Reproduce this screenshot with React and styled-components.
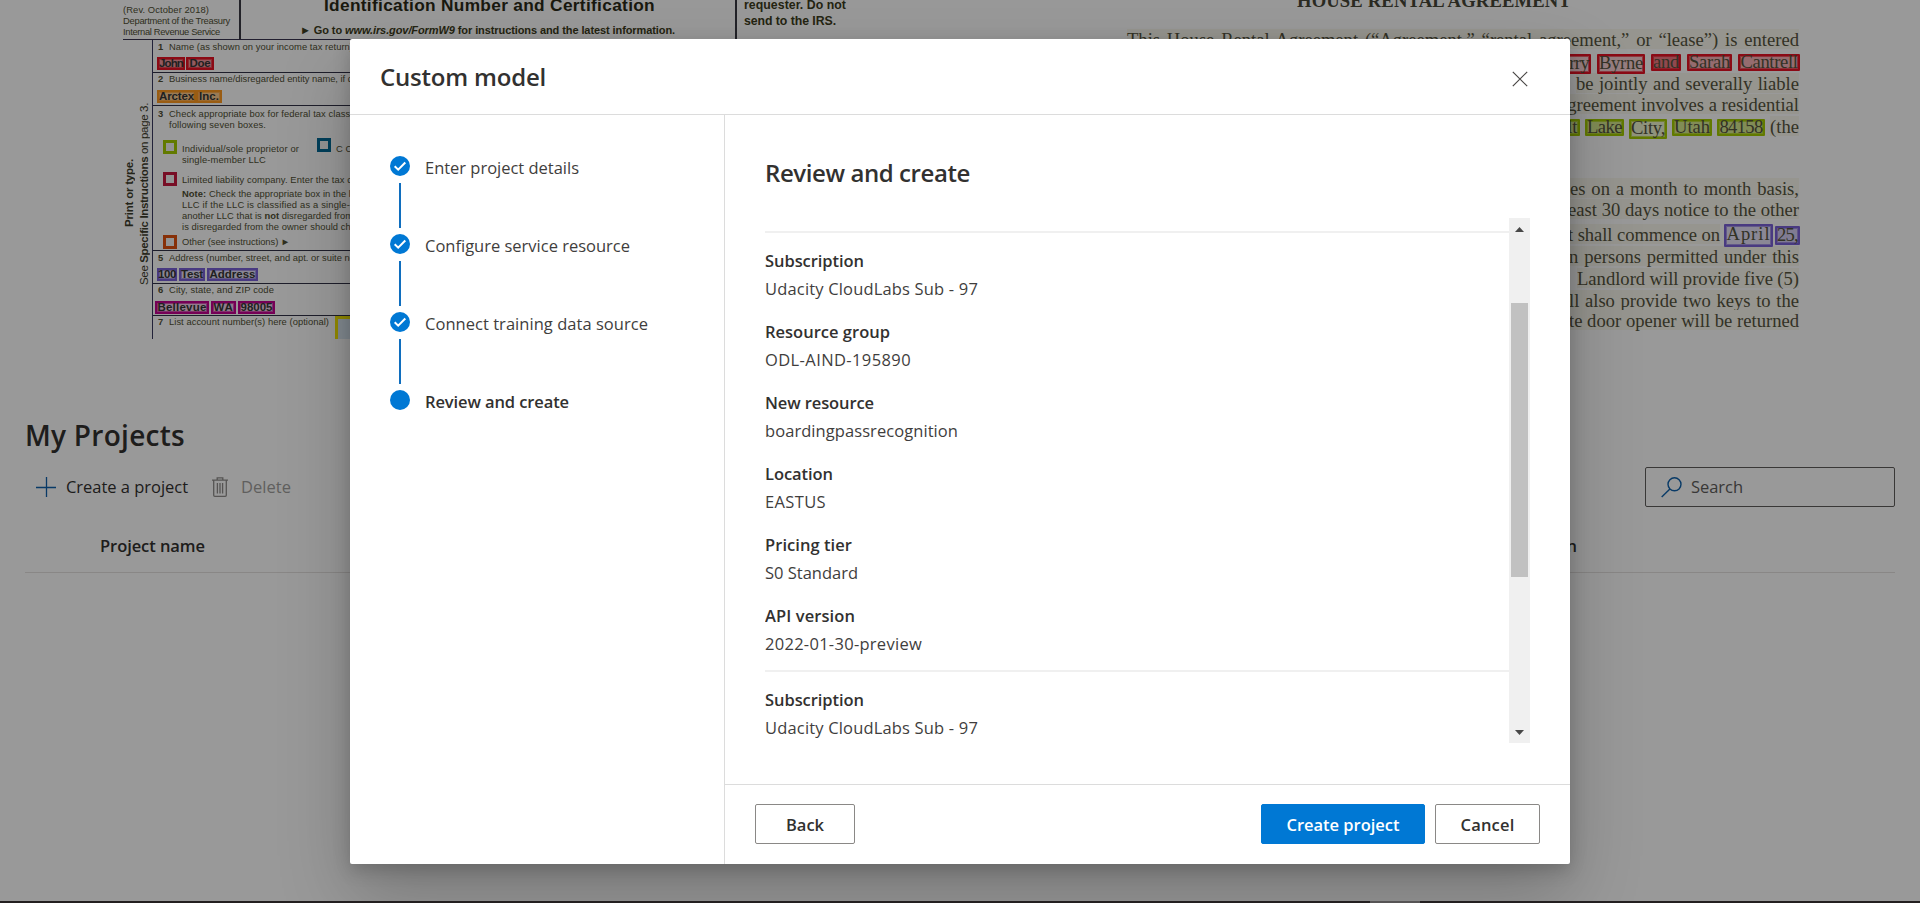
import React, { useLayoutEffect, useRef, useState } from 'react';
import styled, { createGlobalStyle, css } from 'styled-components';

const UI = '"Open Sans", "Noto Sans", sans-serif';
const SANS = '"Liberation Sans", Arial, sans-serif';
const SERIF = '"Liberation Serif", "Times New Roman", serif';

const Global = createGlobalStyle`
  * { box-sizing: border-box; }
  body { margin: 0; background: #fff; font-family: ${UI}; font-size: 16.5px; line-height: 24px; color: #323130; }
  button { font: inherit; cursor: pointer; }
`;

/* Text set to a given measure by adjusting its tracking or its word spaces. */
const Run = styled.span`
  display: inline-block;
  align-self: flex-start;
  justify-self: start;
  white-space: pre;
  flex: none;
`;

function Fit({ w, words, children }) {
  const ref = useRef(null);
  const [space, setSpace] = useState(0);
  useLayoutEffect(() => {
    const el = ref.current;
    const box = el.getBoundingClientRect();
    const text = el.textContent;
    const slots = words ? text.split(' ').length - 1 : text.length;
    setSpace((w - Math.max(box.width, box.height)) / slots);
  }, [w, words]);
  return (
    <Run ref={ref} style={{ [words ? 'wordSpacing' : 'letterSpacing']: `${space}px` }}>
      {children}
    </Run>
  );
}

/* ---------- page ---------- */

const Page = styled.div`
  position: relative;
  width: 1920px;
  height: 903px;
  overflow: hidden;
  display: flex;
  flex-direction: column;
`;

const Samples = styled.div`
  display: flex;
  justify-content: space-between;
  height: 415px;
  padding: 0 120px 0 123px;
`;

/* ---------- tax form ---------- */

const Form = styled.div`
  width: 730px;
  height: 339px;
  overflow: hidden;
  font-family: ${SANS};
  font-size: 9.4px;
  line-height: 11px;
  color: #504f34;
`;

const FormHead = styled.div`
  display: flex;
  height: 40px;
  border-bottom: 1px solid #3a3450;
`;

const FormCell = styled.div`
  display: flex;
  flex-direction: column;
  width: ${(p) => p.$w}px;
  border-right: ${(p) => (p.$last ? 'none' : '2px solid #3a3a44')};
  padding: ${(p) => p.$pad};
  font-weight: ${(p) => (p.$bold ? 700 : 400)};
  color: ${(p) => (p.$bold ? '#3d3c20' : 'inherit')};
`;

const FormTitle = styled.div`
  font-size: 17.3px;
  line-height: 20px;
  color: #2c2b18;
  padding-left: 83px;
  margin-top: -5px;
`;

const FormHint = styled.div`
  font-size: 11px;
  line-height: 12px;
  padding: 9px 0 0 59px;
`;

const Requester = styled.div`
  margin-top: -3px;
  font-size: 12.3px;
  line-height: 16px;
`;

const FormBody = styled.div`
  display: flex;
  height: 299px;
`;

const Side = styled.div`
  display: flex;
  justify-content: flex-end;
  gap: 1px;
  width: 28px;
  margin-right: 1px;
  font-size: 11.5px;
  line-height: 14px;
  color: #3d3c2c;
`;

const SideText = styled.div`
  writing-mode: vertical-rl;
  transform: rotate(180deg);
  font-weight: ${(p) => (p.$bold ? 700 : 400)};
  margin-top: ${(p) => p.$top}px;
  align-self: flex-start;
  width: 14px;
`;

const Questions = styled.div`
  flex: 1;
  border-left: 1px solid #3a3a60;
`;

const Question = styled.div`
  height: ${(p) => p.$h}px;
  padding: ${(p) => p.$top ?? 1}px 0 0 5px;
  border-bottom: ${(p) => (p.$last ? 'none' : '1px solid #333348')};
`;

const Prompt = styled.div`
  display: flex;
  height: 11px;
  margin-left: ${(p) => p.$indent || 0}px;

  b { width: 11px; flex: none; }
`;

const Answer = styled.div`
  display: flex;
  gap: ${(p) => p.$gap ?? 2}px;
  margin: ${(p) => p.$top}px 0 0 ${(p) => p.$indent ?? -1}px;
`;

const tag = css`
  border: 2px solid ${(p) => p.$c};
  box-shadow: inset 0 0 0 1px ${(p) => p.$c}99;
  background: ${(p) => p.$c}${(p) => p.$fill || '30'};
`;

const AnswerTag = styled.span`
  ${tag}
  display: flex;
  align-items: center;
  justify-content: center;
  width: ${(p) => p.$w}px;
  height: 13px;
  font-size: 11.5px;
  font-weight: 700;
  color: #363636;

  ${Run} { align-self: center; }
`;

const Option = styled.div`
  display: flex;
  height: ${(p) => p.$h}px;
  margin-top: ${(p) => p.$gap || 0}px;
  padding-left: 5px;
`;

const Box = styled.span`
  flex: none;
  width: 14px;
  height: 14px;
  margin: ${(p) => p.$top || 0}px 5px 0 0;
  border: 3px solid ${(p) => p.$c};
  background: #f6f6f6;
`;

const OptionText = styled.div`
  display: flex;
  flex-direction: column;
  padding-top: ${(p) => p.$top || 0}px;
  width: ${(p) => (p.$w ? p.$w + 'px' : 'auto')};
`;

const Note = styled(OptionText)`
  height: 50px;
  padding: 3px 0 0 24px;
`;

const Pending = styled.span`
  width: 60px;
  height: 26px;
  margin-left: 6px;
  border: 3px solid #f5e800;
  background: #dceaf5;
`;

/* ---------- rental agreement ---------- */

const Lease = styled.div`
  display: flex;
  flex-direction: column;
  align-items: flex-end;
  width: 674px;
  height: 339px;
  font-family: ${SERIF};
  font-size: 18.6px;
  line-height: 22px;
  color: #55543f;
`;

const LeaseTitle = styled.div`
  width: 503px;
  height: 29px;
  margin: -10px 0 10px;
  font-weight: 700;
  color: #49483a;
`;

const LeaseLine = styled.div`
  display: flex;
  flex: none;
  gap: ${(p) => p.$gap || 0}px;
  height: ${(p) => p.$h}px;
`;

const Ink = styled.span`
  height: 20px;
  margin-right: ${(p) => (p.$mid ? 2 : 1)}px;
  background: #fbf9ee;
`;

const LeaseTag = styled.span`
  ${tag}
  position: relative;
  display: flex;
  align-items: center;
  justify-content: center;
  flex: none;
  width: ${(p) => p.$w}px;
  height: ${(p) => p.$h || 17}px;
  margin-top: ${(p) => p.$top ?? 4}px;
  padding-bottom: ${(p) => p.$lift ?? 1}px;
  line-height: 12px;
  border-radius: 1px;

  ${Run} { align-self: center; }
`;

/* ---------- projects ---------- */

const Projects = styled.section`
  padding: 0 25px;
`;

const Heading = styled.h1`
  margin: 0 0 12px;
  font-size: 28px;
  font-weight: 600;
  line-height: 40px;
`;

const Toolbar = styled.div`
  display: flex;
  align-items: center;
  height: 40px;
  padding-left: 11px;
`;

const Command = styled.div`
  display: flex;
  align-items: center;
  gap: ${(p) => p.$gap}px;
  margin-right: ${(p) => p.$after || 0}px;
  color: ${(p) => (p.$off ? '#a19f9d' : '#323130')};

  ${Run} { align-self: center; }
`;

const SearchBox = styled.label`
  display: flex;
  align-items: center;
  gap: 9px;
  width: 250px;
  height: 40px;
  margin-left: auto;
  padding-left: 15px;
  border: 1px solid #605e5c;
  border-radius: 2px;
  color: #605e5c;

  ${Run} { align-self: center; }
`;

const TableHead = styled.div`
  display: flex;
  justify-content: space-between;
  align-items: center;
  height: 54px;
  margin-top: 12px;
  padding: 0 318px 0 75px;
  border-bottom: 1px solid #e4e2e0;
  font-weight: 600;

  ${Run} { align-self: center; }
`;

const StatusStrip = styled.div`
  position: relative;
  display: flex;
  height: 2px;
  margin-top: auto;
  padding-left: 1370px;
  background: #231f20;
  z-index: 1;

  &::before { content: ''; width: 50px; background: #565455; }
`;

/* ---------- dialog ---------- */

const Overlay = styled.div`
  position: absolute;
  inset: 0;
  padding: 39px 350px;
  background: rgba(0, 0, 0, 0.4);
`;

const Dialog = styled.div`
  display: flex;
  flex-direction: column;
  width: 1220px;
  height: 825px;
  background: #fff;
  border-radius: 2px;
  box-shadow: 0 32px 72px rgba(0, 0, 0, 0.22), 0 6px 18px rgba(0, 0, 0, 0.18);
`;

const DialogHeader = styled.header`
  display: flex;
  align-items: center;
  justify-content: space-between;
  height: 76px;
  padding: 0 42px 0 30px;
  border-bottom: 1px solid #dcdcdc;
`;

const Title = styled.h2`
  margin: 0;
  font-size: 24px;
  font-weight: 600;
  line-height: 32px;
`;

const CloseButton = styled.button`
  display: flex;
  margin-top: 5px;
  padding: 0;
  border: 0;
  background: none;
`;

const DialogBody = styled.div`
  display: flex;
  height: 749px;
`;

const Steps = styled.nav`
  width: 375px;
  padding: 41px 0 0 40px;
  border-right: 1px solid #dcdcdc;
`;

const Step = styled.div`
  display: flex;
  gap: 15px;
  height: 78px;
  font-weight: ${(p) => (p.$current ? 600 : 400)};
  color: ${(p) => (p.$current ? '#323130' : '#3f3e3d')};
`;

const Track = styled.div`
  display: flex;
  flex-direction: column;
  align-items: center;
`;

const Dot = styled.span`
  display: flex;
  width: 20px;
  height: 20px;
  border-radius: 50%;
  background: #0078d4;
`;

const Connector = styled.span`
  width: 2px;
  height: 45px;
  margin-top: 7px;
  background: #106ebe;
`;

const Content = styled.div`
  display: flex;
  flex-direction: column;
  width: 845px;
  padding-top: 42px;
`;

const Scroller = styled.div`
  display: flex;
  height: 525px;
  margin: 29px 40px 41px;
`;

const ContentTitle = styled(Title)`
  padding-left: 40px;
`;

const List = styled.div`
  flex: 1;
  overflow: hidden;
  padding-top: 13px;
`;

const Group = styled.dl`
  display: grid;
  row-gap: 19px;
  margin: 0;
  padding: 16px 0 14px;
  border-top: 2px solid #f0f0f0;
`;

const Entry = styled.div`
  display: grid;
  row-gap: 4px;
  height: 52px;

  dt { font-weight: 600; }
  dd { margin: 0; color: #3f3e3d; }
`;

const Scrollbar = styled.div`
  display: flex;
  flex-direction: column;
  align-items: center;
  justify-content: space-between;
  width: 21px;
  padding: 9px 0 8px;
  background: #f0f0f0;
`;

const Thumb = styled.div`
  width: 17px;
  height: 274px;
  margin: 71px 0 auto;
  background: #c1c1c1;
`;

const Footer = styled.footer`
  display: flex;
  gap: 10px;
  height: 80px;
  padding: 19px 30px 0;
  border-top: 1px solid #dcdcdc;
`;

const Button = styled.button`
  display: flex;
  align-items: center;
  justify-content: center;
  width: ${(p) => p.$w}px;
  height: 40px;
  padding: 1px 0 0;
  margin-right: ${(p) => (p.$start ? 'auto' : 0)};
  border: 1px solid ${(p) => (p.$primary ? '#0078d4' : '#8a8886')};
  border-radius: 2px;
  background: ${(p) => (p.$primary ? '#0078d4' : '#fff')};
  color: ${(p) => (p.$primary ? '#fff' : '#323130')};
  font-weight: 600;

  ${Run} { align-self: center; }
`;

/* ---------- icons ---------- */

const PlusIcon = () => (
  <svg width="20" height="20" viewBox="0 0 20 20" fill="none" stroke="#0f62ac" strokeWidth="1.3">
    <path d="M10.500 0v20M0 10.500h20" />
  </svg>
);
const TrashIcon = () => (
  <svg width="16" height="20" viewBox="0 0 16 20" fill="none" stroke="#8f8d8b" strokeWidth="1.3">
    <path d="M0 3.200h16M5.200 3V.8h5.600V3M1.700 3.200v15q0 1.100 1.100 1.100h10.400q1.100 0 1.100-1.100v-15M5.400 6v10.500M8 6v10.500M10.600 6v10.500" />
  </svg>
);
const SearchIcon = () => (
  <svg width="21" height="21" viewBox="0 0 21 21" fill="none" stroke="#0f62ac" strokeWidth="1.4">
    <circle cx="13.500" cy="7.300" r="6.500" />
    <path d="M8.900 11.900L.7 20.100" />
  </svg>
);
const CloseIcon = () => (
  <svg width="16" height="16" viewBox="0 0 16 16" fill="none" stroke="#484644" strokeWidth="1.200">
    <path d="M.8.8l14.400 14.400M15.200.8L.8 15.200" />
  </svg>
);
const CheckIcon = () => (
  <svg width="20" height="20" viewBox="0 0 20 20" fill="none" stroke="#fff" strokeWidth="2">
    <path d="M4.700 10.200l3.500 3.500 7.100-7.200" />
  </svg>
);
const Arrow = ({ down }) => (
  <svg width="9" height="5" viewBox="0 0 9 5" fill="#484848">
    <path d={down ? 'M0 0h9L4.500 5z' : 'M0 5h9L4.500 0z'} />
  </svg>
);

/* ---------- data ---------- */

const steps = [
  ['Enter project details', 154],
  ['Configure service resource', 205],
  ['Connect training data source', 223],
  ['Review and create', 144],
];

const details = [
  ['Subscription', 99, 'Udacity CloudLabs Sub - 97', 213],
  ['Resource group', 125, 'ODL-AIND-195890', 146],
  ['New resource', 109, 'boardingpassrecognition', 193],
  ['Location', 68, 'EASTUS', 61],
  ['Pricing tier', 87, 'S0 Standard', 93],
  ['API version', 90, '2022-01-30-preview', 157],
];

const RED = '#e81123';
const GREEN = '#a4cc00';
const PURPLE = '#7b62d8';
const MAGENTA = '#c4008f';

const Rows = ({ items }) => (
  <Group>
    {items.map(([label, lw, value, vw]) => (
      <Entry key={label}>
        <dt><Fit w={lw}>{label}</Fit></dt>
        <dd><Fit w={vw}>{value}</Fit></dd>
      </Entry>
    ))}
  </Group>
);

const LeaseText = ({ h, w, children }) => (
  <LeaseLine $h={h}>
    <Ink><Fit w={w} words>{children}</Fit></Ink>
  </LeaseLine>
);

function TaxForm() {
  return (
    <Form>
      <FormHead>
        <FormCell $w={118} $pad="4px 0 0 0">
          <Fit w={86}>(Rev. October 2018)</Fit>
          <Fit w={107}>Department of the Treasury</Fit>
          <Fit w={97}>Internal Revenue Service</Fit>
        </FormCell>
        <FormCell $w={496} $bold $pad="0">
          <FormTitle><Fit w={331}>Identification Number and Certification</Fit></FormTitle>
          <FormHint><Fit w={375}>► Go to <i>www.irs.gov/FormW9</i> for instructions and the latest information.</Fit></FormHint>
        </FormCell>
        <FormCell $w={116} $bold $last $pad="0 0 0 7px">
          <Requester>
            <Fit w={102}>requester. Do not</Fit>
            <Fit w={92}>send to the IRS.</Fit>
          </Requester>
        </FormCell>
      </FormHead>
      <FormBody>
        <Side>
          <SideText $bold $top={119}><Fit w={68}>Print or type.</Fit></SideText>
          <SideText $top={63}><Fit w={182}>See <b>Specific Instructions</b> on page 3.</Fit></SideText>
        </Side>
        <Questions>
          <Question $h={33}>
            <Prompt><b>1</b><Fit w={184}>Name (as shown on your income tax return)</Fit></Prompt>
            <Answer $top={5} $gap={1}>
              <AnswerTag $c={RED} $w={28} $fill="70"><Fit w={24}>John</Fit></AnswerTag>
              <AnswerTag $c={RED} $w={28} $fill="70"><Fit w={21}>Doe</Fit></AnswerTag>
            </Answer>
          </Question>
          <Question $h={33} $top={0}>
            <Prompt><b>2</b><Fit w={186}>Business name/disregarded entity name, if di</Fit></Prompt>
            <Answer $top={6} $gap={0}>
              <AnswerTag $c="#ff9a20" $w={39} $fill="80"><Fit w={35}>Arctex</Fit></AnswerTag>
              <AnswerTag $c="#ff9a20" $w={26} $fill="80"><Fit w={20}>Inc.</Fit></AnswerTag>
            </Answer>
          </Question>
          <Question $h={145} $top={2}>
            <Prompt><b>3</b><Fit w={193}>Check appropriate box for federal tax classific</Fit></Prompt>
            <Prompt $indent={11}><Fit w={97}>following seven boxes.</Fit></Prompt>
            <Option $h={35} $gap={8}>
              <Box $c={GREEN} $top={2} />
              <OptionText $w={135} $top={5}>
                <Fit w={117}>Individual/sole proprietor or</Fit>
                <Fit w={84}>single-member LLC</Fit>
              </OptionText>
              <Box $c="#006a96" />
              <OptionText $top={5}>C C</OptionText>
            </Option>
            <Option $h={12}>
              <Box $c="#c81840" $top={-1} />
              <OptionText $top={1}><Fit w={170}>Limited liability company. Enter the tax c</Fit></OptionText>
            </Option>
            <Note>
              <Fit w={169}><b>Note:</b> Check the appropriate box in the l</Fit>
              <Fit w={176}>LLC if the LLC is classified as a single-m</Fit>
              <Fit w={171}>another LLC that is <b>not</b> disregarded from</Fit>
              <Fit w={174}>is disregarded from the owner should che</Fit>
            </Note>
            <Option $h={14}>
              <Box $c="#e2500e" />
              <OptionText $top={1}><Fit w={108}>Other (see instructions) ►</Fit></OptionText>
            </Option>
          </Question>
          <Question $h={33}>
            <Prompt><b>5</b><Fit w={186}>Address (number, street, and apt. or suite no</Fit></Prompt>
            <Answer $top={5}>
              <AnswerTag $c={PURPLE} $w={20}><Fit w={18}>100</Fit></AnswerTag>
              <AnswerTag $c={PURPLE} $w={26}><Fit w={22}>Test</Fit></AnswerTag>
              <AnswerTag $c={PURPLE} $w={51}><Fit w={46}>Address</Fit></AnswerTag>
            </Answer>
          </Question>
          <Question $h={32} $top={0}>
            <Prompt><b>6</b><Fit w={105}>City, state, and ZIP code</Fit></Prompt>
            <Answer $top={6} $indent={-3}>
              <AnswerTag $c={MAGENTA} $w={54}><Fit w={49}>Bellevue</Fit></AnswerTag>
              <AnswerTag $c={MAGENTA} $w={25}><Fit w={20}>WA</Fit></AnswerTag>
              <AnswerTag $c={MAGENTA} $w={37}><Fit w={32}>98005</Fit></AnswerTag>
            </Answer>
          </Question>
          <Question $h={26} $top={0} $last>
            <Prompt>
              <b>7</b>
              <Fit w={160}>List account number(s) here (optional)</Fit>
              <Pending />
            </Prompt>
          </Question>
        </Questions>
      </FormBody>
    </Form>
  );
}

function RentalAgreement() {
  return (
    <Lease>
      <LeaseTitle><Fit w={274}>HOUSE RENTAL AGREEMENT</Fit></LeaseTitle>
      <LeaseText h={21} w={672}>This House Rental Agreement (“Agreement,” “rental agreement,” or “lease”) is entered</LeaseText>
      <LeaseLine $h={23} $gap={6}>
        <LeaseTag $c={RED} $w={44} $h={20} $lift={2}><Fit w={40}>Kerry</Fit></LeaseTag>
        <LeaseTag $c={RED} $w={48} $h={20} $lift={2}><Fit w={44}>Byrne</Fit></LeaseTag>
        <LeaseTag $c={RED} $w={30} $fill="90"><Fit w={26}>and</Fit></LeaseTag>
        <LeaseTag $c={RED} $w={45} $fill="50"><Fit w={41}>Sarah</Fit></LeaseTag>
        <LeaseTag $c={RED} $w={62} $fill="50"><Fit w={57}>Cantrell</Fit></LeaseTag>
      </LeaseLine>
      <LeaseText h={21} w={223}>be jointly and severally liable</LeaseText>
      <LeaseText h={22} w={240}>agreement involves a residential</LeaseText>
      <LeaseLine $h={62} $gap={5}>
        <LeaseTag $c={GREEN} $w={34} $top={3} $fill="70"><Fit w={29}>Salt</Fit></LeaseTag>
        <LeaseTag $c={GREEN} $w={39} $top={3} $fill="70"><Fit w={35}>Lake</Fit></LeaseTag>
        <LeaseTag $c={GREEN} $w={38} $top={3} $h={20} $lift={2}><Fit w={34}>City,</Fit></LeaseTag>
        <LeaseTag $c={GREEN} $w={40} $top={3} $fill="70"><Fit w={36}>Utah</Fit></LeaseTag>
        <LeaseTag $c={GREEN} $w={48} $top={3} $fill="70"><Fit w={43}>84158</Fit></LeaseTag>
        <Ink><Fit w={29}>(the</Fit></Ink>
      </LeaseLine>
      <LeaseText h={21} w={229}>es on a month to month basis,</LeaseText>
      <LeaseText h={25} w={231}>east 30 days notice to the other</LeaseText>
      <LeaseLine $h={22} $gap={2}>
        <Ink $mid><Fit w={152}>t shall commence on</Fit></Ink>
        <LeaseTag $c={PURPLE} $w={49} $h={23} $top={0} $lift={3}><Fit w={44}>April</Fit></LeaseTag>
        <LeaseTag $c={PURPLE} $w={25} $h={19} $top={2} $fill="50"><Fit w={21}>25,</Fit></LeaseTag>
      </LeaseLine>
      <LeaseText h={22} w={230}>n persons permitted under this</LeaseText>
      <LeaseText h={22} w={222}>Landlord will provide five (5)</LeaseText>
      <LeaseText h={20} w={230}>ll also provide two keys to the</LeaseText>
      <LeaseText h={22} w={230}>te door opener will be returned</LeaseText>
    </Lease>
  );
}

export default function App() {
  return (
    <Page>
      <Global />
      <Samples>
        <TaxForm />
        <RentalAgreement />
      </Samples>
      <Projects>
        <Heading><Fit w={160}>My Projects</Fit></Heading>
        <Toolbar>
          <Command $gap={10} $after={24}><PlusIcon /><Fit w={122}>Create a project</Fit></Command>
          <Command $gap={13} $off><TrashIcon /><Fit w={50}>Delete</Fit></Command>
          <SearchBox><SearchIcon /><Fit w={52}>Search</Fit></SearchBox>
        </Toolbar>
        <TableHead>
          <Fit w={105}>Project name</Fit>
          <span>Description</span>
        </TableHead>
      </Projects>
      <StatusStrip />
      <Overlay>
        <Dialog role="dialog">
          <DialogHeader>
            <Title><Fit w={166}>Custom model</Fit></Title>
            <CloseButton aria-label="Close"><CloseIcon /></CloseButton>
          </DialogHeader>
          <DialogBody>
            <Steps>
              {steps.map(([label, w], i) => {
                const current = i === steps.length - 1;
                return (
                  <Step key={label} $current={current}>
                    <Track>
                      <Dot>{!current && <CheckIcon />}</Dot>
                      {!current && <Connector />}
                    </Track>
                    <Fit w={w}>{label}</Fit>
                  </Step>
                );
              })}
            </Steps>
            <Content>
              <ContentTitle><Fit w={205}>Review and create</Fit></ContentTitle>
              <Scroller>
                <List>
                  <Rows items={details} />
                  <Rows items={details.slice(0, 1)} />
                </List>
                <Scrollbar>
                  <Arrow />
                  <Thumb />
                  <Arrow down />
                </Scrollbar>
              </Scroller>
              <Footer>
                <Button $w={100} $start><Fit w={38}>Back</Fit></Button>
                <Button $w={164} $primary><Fit w={113}>Create project</Fit></Button>
                <Button $w={105}><Fit w={54}>Cancel</Fit></Button>
              </Footer>
            </Content>
          </DialogBody>
        </Dialog>
      </Overlay>
    </Page>
  );
}
